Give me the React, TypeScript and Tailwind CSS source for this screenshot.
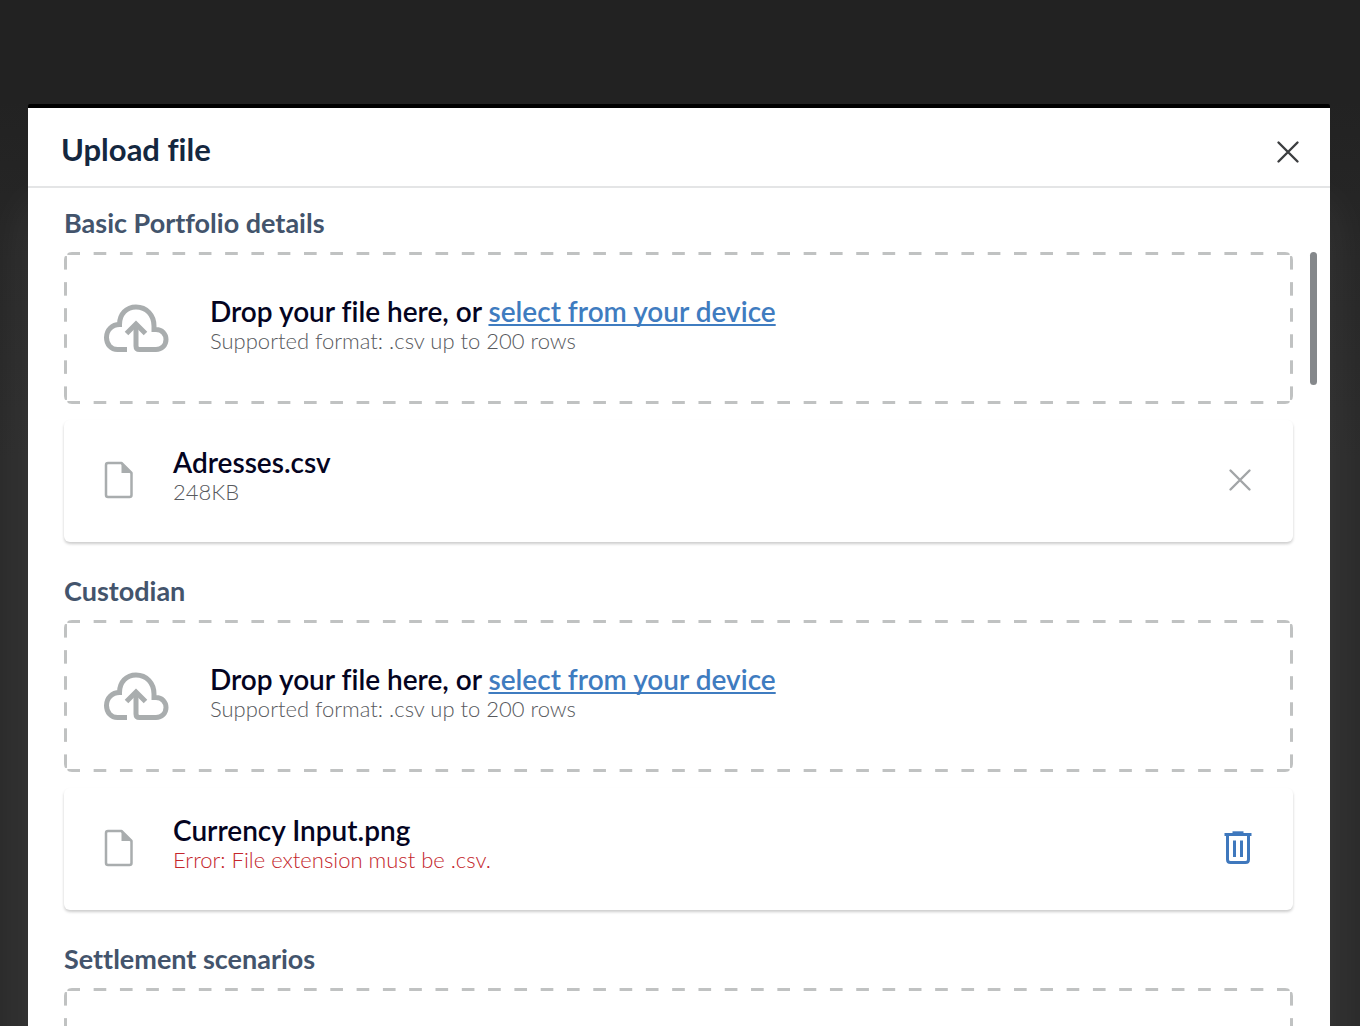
import { useState } from 'react';

type UploadedFile = {
    name: string;
    size?: string;
    error?: string;
};

type Section = {
    id: string;
    title: string;
    file?: UploadedFile;
};

const SECTIONS: Section[] = [
    {
        id: 'portfolio',
        title: 'Basic Portfolio details',
        file: { name: 'Adresses.csv', size: '248KB' },
    },
    {
        id: 'custodian',
        title: 'Custodian',
        file: {
            name: 'Currency Input.png',
            error: 'Error: File extension must be .csv.',
        },
    },
    { id: 'settlement', title: 'Settlement scenarios' },
];

const CloudUploadIcon = () => (
    <svg
        className="h-[50px] w-[66px] shrink-0"
        viewBox="1 0 66 50"
        fill="none"
        stroke="#a9adae"
        strokeWidth="5"
    >
        <path d="M24 45.500H14.500C8 45.500 3.500 40.500 3.500 33.500C3.500 26 9 20.500 16.500 20.500C16.500 10 23.500 3 33 3C43.500 3 51 11 51 22V25.500H53C59 25.500 63 30 63 35.500C63 41.500 58.500 45.500 53 45.500H36.500C34 45.500 33 44 33 42V20" />
        <path d="M23.500 29.500L33 20L42.500 29.500" />
    </svg>
);

const FileIcon = () => (
    <svg className="h-[38px] w-[30px] shrink-0" viewBox="0 0 30 38" fill="none">
        <path
            d="M4 2H17.500L27.500 12V34C27.500 35.200 26.700 36 25.500 36H4C2.800 36 2 35.200 2 34V4C2 2.800 2.800 2 4 2Z"
            stroke="#a9adae"
            strokeWidth="2.500"
            strokeLinejoin="round"
        />
        <path d="M17.500 1.500V12H28Z" fill="#a9adae" />
    </svg>
);

const CrossIcon = (props: { className: string }) => (
    <svg
        className={props.className}
        viewBox="0 0 24 24"
        fill="none"
        stroke="currentColor"
        strokeWidth="2.400"
        strokeLinecap="round"
    >
        <path d="M2.500 2.500L21.500 21.500M21.500 2.500L2.500 21.500" />
    </svg>
);

const TrashIcon = () => (
    <svg
        className="h-[34px] w-[28px]"
        viewBox="0 0 28 34"
        fill="none"
        stroke="#3f78bd"
        strokeWidth="3"
    >
        <path d="M0.500 3.500H27.500" />
        <path d="M8.500 1.800H19.500" />
        <path d="M3.500 4V28.500C3.500 30.500 4.500 31.500 6.500 31.500H21.500C23.500 31.500 24.500 30.500 24.500 28.500V4" />
        <path d="M10.500 9.500V26M17.500 9.500V26" />
    </svg>
);

const DropZone = (props: { id: string }) => {
    return (
        <div
            className="
            flex h-[152px] items-center gap-10 rounded-[8px] px-10 pt-[2px]
            [background-image:linear-gradient(90deg,transparent_25%,#c0c2c2_25%_75%,transparent_75%),linear-gradient(90deg,transparent_25%,#c0c2c2_25%_75%,transparent_75%),linear-gradient(#c0c2c2_25%,transparent_25%_75%,#c0c2c2_75%),linear-gradient(#c0c2c2_25%,transparent_25%_75%,#c0c2c2_75%)]
            [background-position:center_top,center_bottom,left_center,right_center]
            [background-repeat:repeat-x,repeat-x,repeat-y,repeat-y]
            [background-size:2.14%_3px,2.14%_3px,3px_17.15%,3px_17.15%]"
        >
            <CloudUploadIcon />
            <div className="pb-2">
                <p className="text-[28px] leading-8 font-semibold text-[#04041f]">
                    Drop your file here, or{' '}
                    <label
                        htmlFor={props.id}
                        className="cursor-pointer text-[#3f7cc0] underline decoration-2 underline-offset-2 [text-decoration-skip-ink:none]"
                    >
                        select from your device
                    </label>
                </p>
                <p className="text-[22px] leading-7 font-light text-[#585a5e]">
                    Supported format: .csv up to 200 rows
                </p>
                <input id={props.id} type="file" accept=".csv" className="hidden" />
            </div>
        </div>
    );
};

const FileCard = (props: { file: UploadedFile; onRemove: () => void }) => {
    const { file, onRemove } = props;

    return (
        <div className="mt-4 flex h-[122px] items-center rounded-[6px] pr-[41px] pb-[2px] pl-10 shadow-[0px_2px_3px_0px_rgba(0,0,0,0.2)]">
            <FileIcon />
            <div className="ml-[39px] flex-1 pb-2">
                <p className="text-[28px] leading-8 font-semibold text-[#04041f]">
                    {file.name}
                </p>
                {file.error ? (
                    <p className="text-[22px] leading-7 font-light text-[#c4262c]">
                        {file.error}
                    </p>
                ) : (
                    <p className="text-[22px] leading-7 font-light text-[#585a5e]">
                        {file.size}
                    </p>
                )}
            </div>
            <button
                type="button"
                onClick={onRemove}
                aria-label={`Remove ${file.name}`}
                className="cursor-pointer text-[#a2a5a7]"
            >
                {file.error ? <TrashIcon /> : <CrossIcon className="size-6" />}
            </button>
        </div>
    );
};

const App = () => {
    const [sections, setSections] = useState(SECTIONS);

    const removeFile = (id: string) => {
        setSections(
            sections.map((s) => (s.id === id ? { ...s, file: undefined } : s))
        );
    };

    return (
        <div className="flex h-screen flex-col overflow-hidden bg-[linear-gradient(#222222_100px,#272727_260px,#2b2b2b_460px)] pt-[104px] pr-[30px] pl-7 font-['Lato',sans-serif] [font-variant-ligatures:none]">
            <div
                role="dialog"
                aria-labelledby="upload-title"
                className="flex min-h-0 flex-1 flex-col rounded-t-[2px] border-t-4 border-black bg-white shadow-[0px_100px_50px_0px_rgba(255,255,255,0.08)]"
            >
                <header className="flex h-20 shrink-0 items-center justify-between border-b-2 border-[#e4e5e6] pr-[30px] pl-[33px]">
                    <h1
                        id="upload-title"
                        className="pt-1 text-[31px] leading-9 font-bold text-[#14273f]"
                    >
                        Upload file
                    </h1>
                    <button
                        type="button"
                        aria-label="Close"
                        className="cursor-pointer pt-[10px] text-[#3c3e40]"
                    >
                        <CrossIcon className="size-6" />
                    </button>
                </header>

                <div className="flex min-h-0 flex-1 pr-[13px] pl-9">
                    <div className="-mx-2 flex-1 overflow-y-auto px-2 pt-[18px] [scrollbar-width:none]">
                        {sections.map((section) => (
                            <section key={section.id} className="mb-8">
                                <h2 className="mb-3 text-[27px] leading-[34px] font-bold text-[#43546c]">
                                    {section.title}
                                </h2>
                                <DropZone id={`file-${section.id}`} />
                                {section.file && (
                                    <FileCard
                                        file={section.file}
                                        onRemove={() => removeFile(section.id)}
                                    />
                                )}
                            </section>
                        ))}
                    </div>
                    <div className="mt-16 ml-[17px] h-[133px] w-[7px] rounded-full bg-[#85888b]" />
                </div>
            </div>
        </div>
    );
};

export default App;
